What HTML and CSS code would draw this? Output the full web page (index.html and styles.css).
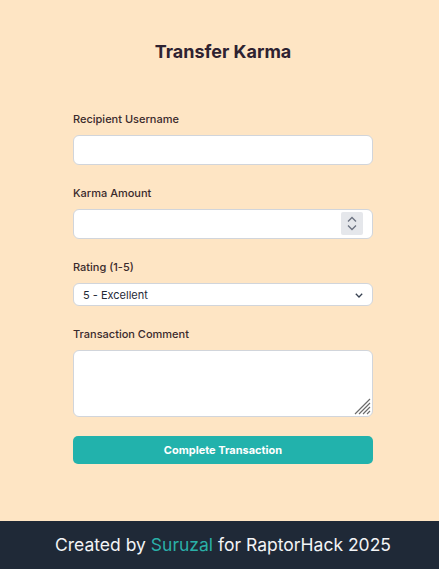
FILE: index.html
```html
<!DOCTYPE html>
<html lang="en">
<head>
<meta charset="utf-8">
<title>Transfer Karma</title>
<link rel="stylesheet" href="styles.css">
</head>
<body>
<main class="page">
  <div class="card">
    <h1 class="title">Transfer Karma</h1>
    <form class="form">
      <div class="field">
        <label class="label" for="recipient">Recipient Username</label>
        <input class="input" id="recipient" type="text">
      </div>
      <div class="field">
        <label class="label" for="amount">Karma Amount</label>
        <div class="wrap">
          <input class="input input-number" id="amount" type="number">
          <span class="spinner" aria-hidden="true">
            <svg width="22" height="23" viewBox="0 0 22 23">
              <path d="M7 9.5 L11 5.5 L15 9.5" fill="none" stroke="#6b7280" stroke-width="1.3"/>
              <path d="M7 13.5 L11 17.5 L15 13.5" fill="none" stroke="#6b7280" stroke-width="1.3"/>
            </svg>
          </span>
        </div>
      </div>
      <div class="field">
        <label class="label" for="rating">Rating (1-5)</label>
        <div class="wrap">
          <select class="select" id="rating">
            <option>5 - Excellent</option>
            <option>4 - Good</option>
            <option>3 - Average</option>
            <option>2 - Poor</option>
            <option>1 - Terrible</option>
          </select>
          <svg class="chevron" width="8" height="5" viewBox="0 0 8 5" aria-hidden="true">
            <path d="M0.8 0.8 L4 4 L7.2 0.8" fill="none" stroke="#374151" stroke-width="1.3"/>
          </svg>
        </div>
      </div>
      <div class="field">
        <label class="label" for="comment">Transaction Comment</label>
        <div class="wrap">
          <textarea class="textarea" id="comment"></textarea>
          <svg class="grip" width="18" height="18" viewBox="0 0 18 18" aria-hidden="true">
            <path d="M17 2 L2 17 M17 6 L6 17 M17 10 L10 17 M17 14 L14 17" fill="none" stroke="#6b6b6b" stroke-width="1.2"/>
          </svg>
        </div>
      </div>
      <button class="button" type="button">Complete Transaction</button>
    </form>
  </div>
</main>
<footer class="footer">
  <p class="footer-text">Created by <span class="accent">Suruzal</span> for RaptorHack 2025</p>
</footer>
</body>
</html>
```
FILE: styles.css
```css
* { box-sizing: border-box; }
html, body { margin: 0; padding: 0; }
body {
  background: #fee5c4;
  font-family: Inter, "Noto Sans", sans-serif;
  min-height: 569px;
  display: flex;
  flex-direction: column;
}
.page {
  flex: 1;
  display: flex;
  justify-content: center;
  padding-left: 7px;
}
.card {
  width: 300px;
  padding-top: 39px;
}
.title {
  margin: 0 0 47px;
  text-align: center;
  font-size: 18px;
  line-height: 26px;
  font-weight: 700;
  color: #2e2231;
}
.form {
  display: flex;
  flex-direction: column;
}
.field {
  display: flex;
  flex-direction: column;
  margin-bottom: 21px;
}
.label {
  font-size: 11px;
  line-height: 14px;
  font-weight: 500;
  color: #3a2a2c;
  margin-bottom: 9px;
}
.wrap {
  position: relative;
}
.input, .select, .textarea {
  width: 100%;
  border: 1px solid #d1d5db;
  border-radius: 6px;
  background: #fff;
  font-family: inherit;
  font-size: 11px;
  color: #1f2937;
  outline: none;
}
.input {
  display: block;
  height: 30px;
  padding: 4px 8px;
}
.input-number {
  -moz-appearance: textfield;
  appearance: textfield;
}
.input-number::-webkit-inner-spin-button,
.input-number::-webkit-outer-spin-button {
  -webkit-appearance: none;
  margin: 0;
}
.spinner {
  position: absolute;
  right: 10px;
  top: 3px;
  width: 22px;
  height: 23px;
  background: #e5e7eb;
  border-radius: 2px;
  display: flex;
}
.select {
  display: block;
  height: 23px;
  padding: 0 20px 0 9px;
  -webkit-appearance: none;
  appearance: none;
  color: #1f2937;
}
.chevron {
  position: absolute;
  right: 10px;
  top: 10px;
  pointer-events: none;
}
.textarea {
  display: block;
  height: 67px;
  padding: 6px 8px;
  margin: 0;
  resize: none;
}
.grip {
  position: absolute;
  right: 2px;
  bottom: 2px;
  pointer-events: none;
}
.button {
  margin-top: -2px;
  height: 28px;
  border: none;
  border-radius: 5px;
  background: #22b2ac;
  color: #fff;
  font-family: inherit;
  font-size: 11px;
  font-weight: 700;
}
.footer {
  background: #1f2937;
  height: 48px;
  display: flex;
  align-items: center;
  justify-content: center;
  padding-left: 7px;
}
.footer-text {
  margin: 0;
  color: #f3f4f6;
  font-size: 17.5px;
  line-height: 22px;
}
.accent { color: #2ab0a8; }
```
